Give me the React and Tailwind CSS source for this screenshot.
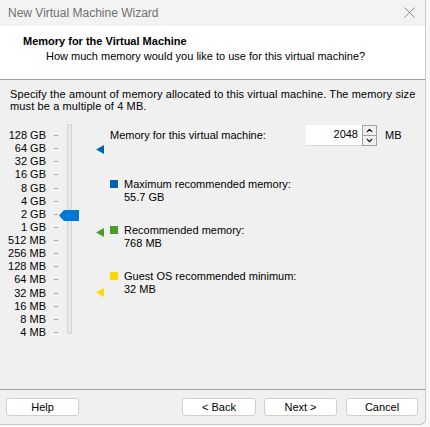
import { ChevronUp, ChevronDown } from 'lucide-react';

const labels = [
  '128 GB', '64 GB', '32 GB', '16 GB', '8 GB', '4 GB', '2 GB', '1 GB',
  '512 MB', '256 MB', '128 MB', '64 MB', '32 MB', '16 MB', '8 MB', '4 MB',
];

function Marker({ color, top }) {
  // small left-pointing triangle next to the slider
  return (
    <svg
      className="absolute left-[86px]"
      style={{ top }}
      width="8"
      height="9"
      viewBox="0 0 8 9"
    >
      <path d="M0 4.5L8 0V9Z" fill={color} />
    </svg>
  );
}

function Info({ color, title, value }) {
  return (
    <div className="flex gap-[6px]">
      <div className={`w-[8px] h-[8px] mt-[2px] ${color}`} />
      <div className="leading-[13px]">
        <div>{title}</div>
        <div>{value}</div>
      </div>
    </div>
  );
}

function Button({ children, className = '' }) {
  return (
    <button
      className={`h-[18px] bg-white border border-[#d0d0d0] rounded-[3px] text-[11px] text-black leading-none ${className}`}
    >
      {children}
    </button>
  );
}

export default function App() {
  return (
    <div className="w-[430px] h-[427px] bg-[#f7f7f7] overflow-hidden">
      <div
        className="w-[426px] h-[425px] bg-[#f0f0f0] border-r border-b border-[#c8c8c8] rounded-br-[6px] flex flex-col text-[11px] text-black"
        style={{ fontFamily: '"Liberation Sans", Arial, sans-serif' }}
      >
        {/* title bar */}
        <div className="h-[26px] shrink-0 bg-[#f3f3f3] flex items-center justify-between pl-[8px] pr-[10px]">
          <span className="text-[12px] text-[#707070]">New Virtual Machine Wizard</span>
          <svg width="11" height="11" viewBox="0 0 11 11" className="mb-[2px]">
            <path d="M0.5 0.5L10.5 10.5M10.5 0.5L0.5 10.5" stroke="#8a8a8a" strokeWidth="1" />
          </svg>
        </div>

        {/* header */}
        <div className="h-[54px] shrink-0 bg-white border-b border-[#a0a0a0] pt-[9px]">
          <div className="pl-[23px] font-bold leading-[13px]">Memory for the Virtual Machine</div>
          <div className="pl-[46px] leading-[13px] mt-[2px]">
            How much memory would you like to use for this virtual machine?
          </div>
        </div>

        {/* body */}
        <div className="flex-1 flex flex-col px-[10px] pt-[8px]">
          <div className="leading-[12px] tracking-[0.12px] whitespace-nowrap">
            <div>Specify the amount of memory allocated to this virtual machine. The memory size</div>
            <div>must be a multiple of 4 MB.</div>
          </div>

          <div className="flex mt-[15px]">
            {/* slider */}
            <div className="relative w-[100px] shrink-0 h-[212px]">
              <div className="flex">
                <div className="w-[36px] flex flex-col items-end pt-[2px]">
                  {labels.map((l) => (
                    <div key={l} className="h-[13.13px] leading-[13px] whitespace-nowrap">
                      {l}
                    </div>
                  ))}
                </div>
                <div className="flex flex-col pt-[2px] ml-[8px]">
                  {labels.map((l) => (
                    <div key={l} className="h-[13.13px] flex items-center">
                      <div className="w-[4px] h-px bg-[#a8a8a8]" />
                    </div>
                  ))}
                </div>
                <div className="ml-[9px] w-[5px] h-[210px] mt-[-3px] border border-[#d6d6d6] bg-[#e7e7e7]" />
              </div>

              {/* thumb */}
              <svg className="absolute left-[49px] top-[83px]" width="20" height="11" viewBox="0 0 20 11">
                <path d="M0 5.5L5 0H20V11H5Z" fill="#0078d7" />
              </svg>

              <Marker color="#0063b1" top="18px" />
              <Marker color="#4c9a2a" top="101px" />
              <Marker color="#ffd800" top="161px" />
            </div>

            {/* right column */}
            <div className="flex-1 flex flex-col">
              <div className="flex items-center h-[20px] mt-[-2px]">
                <span className="w-[196px]">Memory for this virtual machine:</span>
                <div className="w-[56px] h-[21px] bg-white border-b border-[#d8d8d8] flex items-center justify-end pr-[4px]">
                  2048
                </div>
                <div className="w-[15px] h-[21px] flex flex-col border border-[#a0a0a0] bg-[#f0f0f0]">
                  <div className="flex-1 flex items-center justify-center border-b border-[#a0a0a0]">
                    <ChevronUp size={9} strokeWidth={3} />
                  </div>
                  <div className="flex-1 flex items-center justify-center">
                    <ChevronDown size={9} strokeWidth={3} />
                  </div>
                </div>
                <span className="ml-[8px]">MB</span>
              </div>

              <div className="mt-[33px] flex flex-col gap-[20px]">
                <Info color="bg-[#0063b1]" title="Maximum recommended memory:" value="55.7 GB" />
                <Info color="bg-[#4c9a2a]" title="Recommended memory:" value="768 MB" />
                <Info color="bg-[#ffd800]" title="Guest OS recommended minimum:" value="32 MB" />
              </div>
            </div>
          </div>
        </div>

        {/* footer */}
        <div className="h-[35px] shrink-0 border-t border-[#a0a0a0] flex items-start pt-[8px] px-[6px]">
          <Button className="w-[73px]">Help</Button>
          <div className="flex-1" />
          <Button className="w-[74px]">&lt; Back</Button>
          <Button className="w-[73px] ml-[8px]">Next &gt;</Button>
          <Button className="w-[72px] ml-[9px]">Cancel</Button>
          <div className="w-[1px]" />
        </div>
      </div>
    </div>
  );
}
